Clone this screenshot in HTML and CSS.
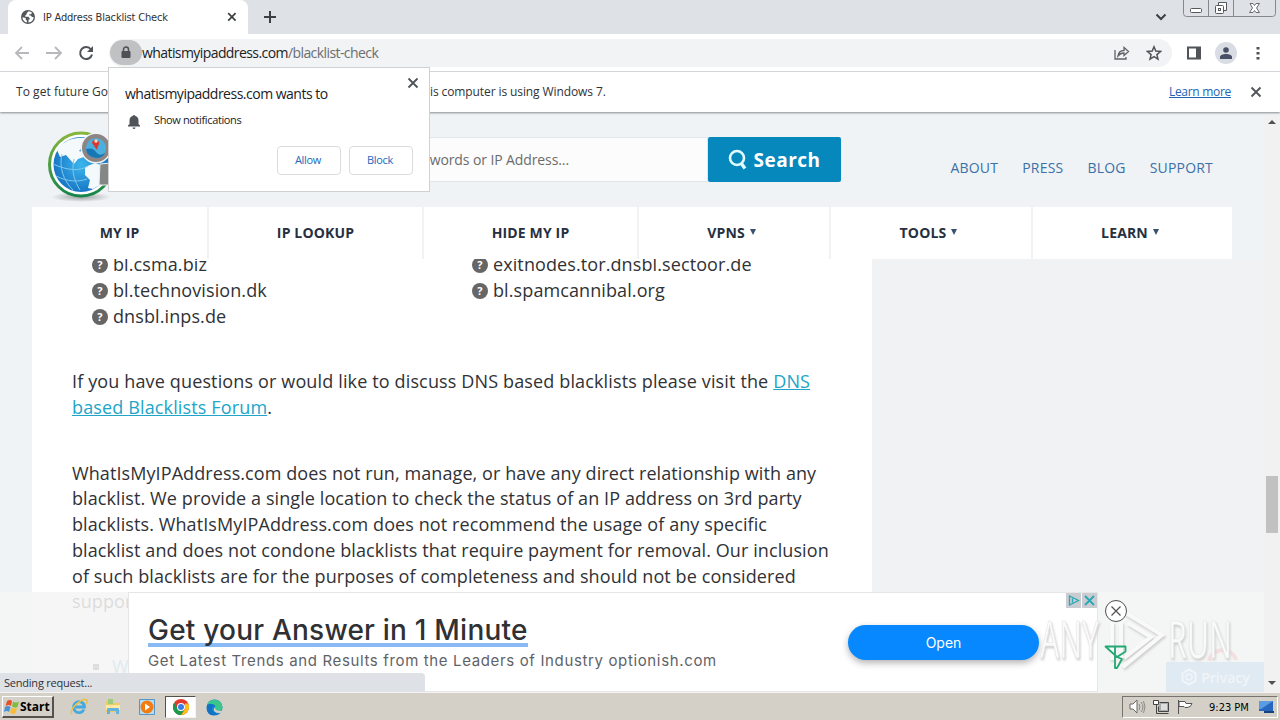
FILE: index.html
```html
<!DOCTYPE html>
<html lang="en">
<head>
    <meta charset="UTF-8">
    <title>IP Address Blacklist Check</title>
    <link rel="stylesheet" href="styles.css">
</head>
<body>
    <!-- Tab strip -->
    <div class="tab-strip">
        <div class="tab">
            <svg class="tab-icon" width="14" height="14" viewBox="0 0 14 14">
                <circle cx="7" cy="7" r="7" fill="#53565a"/>
                <path d="M7.5 1.3L5.6 3.2v1.3L4.2 5.6v1.2h3.2l1.3 1.4v1.4H7.5v2.8C10.6 12.2 12.6 10 12.6 7H11L9.8 5.5H8.3V4.2h1.8l.8-1.4C9.9 1.8 8.8 1.4 7.5 1.3zM1.4 7.2c.1 2.8 2 4.9 4.5 5.3V10.700L4.700 9.400V8.100z" fill="#fff"/>
            </svg>
            <span class="tab-title">IP Address Blacklist Check</span>
            <svg width="10" height="10" viewBox="0 0 10 10"><path d="M1.200 1.200l7.400 7.400M8.600 1.200L1.200 8.600" stroke="#3c4043" stroke-width="1.700"/></svg>
        </div>
        <svg class="new-tab" width="14" height="14" viewBox="0 0 14 14"><path d="M7 1v12M1 7h12" stroke="#3c4043" stroke-width="2"/></svg>
        <svg class="tab-search" width="12" height="8" viewBox="0 0 12 8"><path d="M1.500 1.500L6 6l4.500-4.500" fill="none" stroke="#3c4043" stroke-width="2"/></svg>
        <svg class="window-buttons" width="93" height="17" viewBox="0 0 93 17">
            <path d="M.5 0v13.500q0 3 3 3h86q3 0 3-3V0M25.500 0v16M50.500 0v16" fill="none" stroke="#85888e"/>
            <rect x="7.500" y="8.500" width="11" height="4" rx="1" fill="#fff" stroke="#55585c"/>
            <path d="M35.500 5.500v-3h8v8h-3" fill="#fff" stroke="#55585c"/>
            <rect x="32.500" y="5.500" width="8" height="8" rx="1" fill="#fff" stroke="#55585c"/>
            <rect x="35.500" y="8.500" width="2" height="2" fill="none" stroke="#55585c"/>
            <path d="M67 3.500h3l1.500 2L73 3.500h3.500L73.500 8l3 4.500H73l-1.500-2-1.500 2h-3.500l3-4.500z" fill="#fff" stroke="#666a70"/>
        </svg>
    </div>

    <!-- Toolbar -->
    <div class="toolbar">
        <svg class="nav-buttons" width="82" height="18" viewBox="0 0 82 18">
            <path d="M17 9H4M10 3L4 9l6 6" fill="none" stroke="#b6b8bb" stroke-width="1.800"/>
            <path d="M33 9h15M42 3l6 6-6 6" transform="translate(1 0)" fill="none" stroke="#b6b8bb" stroke-width="1.800"/>
            <path d="M79 5.500A6 6 0 1 0 80 10.500" fill="none" stroke="#505357" stroke-width="2"/>
            <path d="M81 2v6h-6z" fill="#505357"/>
        </svg>
        <div class="omnibox">
            <span class="site-chip">
                <svg width="10" height="13" viewBox="0 0 10 13"><path d="M2.500 6V3.500a2.500 2.500 0 0 1 5 0V6" fill="none" stroke="#4d5054" stroke-width="1.500"/><rect x="0.500" y="5" width="9" height="7" rx="1" fill="#4d5054"/></svg>
            </span>
            <span class="url">whatismyipaddress.com<span class="url-path">/blacklist-check</span></span>
            <svg class="share" width="16" height="14" viewBox="0 0 16 14"><path d="M1 4v9h11v-2M4 10c.5-4 2.500-5.500 6-5.500V1.500l4.500 4-4.500 4V7C7 7 5.500 8 4 10z" fill="none" stroke="#5f6368" stroke-width="1.300"/></svg>
            <svg class="star" width="16" height="16" viewBox="0 0 16 16"><path d="M8 1.800l1.800 4.300 4.700.4-3.600 3.100 1.100 4.600L8 11.700l-4 2.500 1.100-4.600L1.500 6.500l4.700-.4z" fill="none" stroke="#505357" stroke-width="1.500"/></svg>
        </div>
        <svg class="side-panel" width="14" height="14" viewBox="0 0 14 14"><path d="M1 1.500h12v11H1z" fill="none" stroke="#505357" stroke-width="2"/><path d="M9 1h5v12H9z" fill="#505357"/></svg>
        <span class="avatar"><svg width="12" height="12" viewBox="0 0 12 12"><circle cx="6" cy="3" r="2.800" fill="#475067"/><path d="M0 12V10c0-4 12-4 12 0v2z" fill="#475067"/></svg></span>
        <svg class="menu-dots" width="4" height="14" viewBox="0 0 4 14"><path d="M.5 1h3v2.500h-3zM.5 6h3v2.500h-3zM.5 11h3v2.500h-3z" fill="#505357"/></svg>
    </div>

    <!-- Info bar -->
    <div class="infobar">
        <span class="info-start">To get future Go</span>
        <span class="info-end">is computer is using Windows 7.</span>
        <a class="learn-more">Learn more</a>
        <svg width="12" height="12" viewBox="0 0 12 12"><path d="M1.500 1.500l9 9M10.500 1.500l-9 9" stroke="#505357" stroke-width="1.800"/></svg>
    </div>

    <div class="viewport">
        <div class="page">
            <header class="site-header">
                <svg class="logo" width="72" height="76" viewBox="0 0 72 76">
                    <defs>
                        <linearGradient id="ring" x2="0" y2="1"><stop offset="0" stop-color="#86b63e"/><stop offset="1" stop-color="#16854a"/></linearGradient>
                        <radialGradient id="sea"><stop offset="0" stop-color="#3bb6ee"/><stop offset="1" stop-color="#1977c6"/></radialGradient>
                        <radialGradient id="shade"><stop offset="0" stop-color="#9da0a0"/><stop offset="1" stop-color="#9da0a0" stop-opacity="0"/></radialGradient>
                    </defs>
                    <ellipse cx="36" cy="69" rx="30" ry="5" fill="url(#shade)"/>
                    <circle cx="36" cy="36.500" r="31.500" fill="#fff" stroke="url(#ring)" stroke-width="3"/>
                    <circle cx="36" cy="36.500" r="27.500" fill="url(#sea)"/>
                    <path d="M12 22C20 10 34 8 46 11l-2 8-5-2-5 6 7 2 5 6-7-2-6 2-4 5-8-9-6 2zM40 39l10-4 14 5c0 9-6 16-16 21l-5-1 2-8-5-5z" fill="#f4f9fc"/>
                    <path d="M8 36c15 7 28 7 35 2M11 48c12 6 22 6 31 3M17 26c-3 13 1 26 11 36M29 31c-3 13 1 23 6 31" fill="none" stroke="#7fc9ec" stroke-width="1"/>
                    <path d="M55 36l11-1v22H54z" fill="#858787" stroke="#eee"/>
                    <circle cx="51" cy="20" r="15.500" fill="#eef2f3"/>
                    <circle cx="51" cy="20" r="12" fill="#4ab1df" stroke="#8c8583" stroke-width="4"/>
                    <path d="M41 21q7-2 10 3t9 1q-2 5-9 5-9-1-10-9z" fill="#1677b7"/>
                    <path d="M52 22l-5-7q1-5 5-3 4 2 1 6z" fill="#dc3730"/><circle cx="51" cy="13" r="1.700" fill="#ffe0bd"/>
                </svg>
                <div class="search">
                    <div class="search-input"><span>ywords or IP Address...</span></div>
                    <button class="search-button">
                        <svg width="20" height="22" viewBox="0 0 20 22"><circle cx="9" cy="9" r="7" fill="none" stroke="#e2fbff" stroke-width="2.600"/><path d="M13 14l4 5.500" stroke="#e2fbff" stroke-width="3.400"/></svg>
                        <span>Search</span>
                    </button>
                </div>
                <nav class="top-links">
                    <a>ABOUT</a><a>PRESS</a><a>BLOG</a><a>SUPPORT</a>
                </nav>
            </header>

            <nav class="main-nav">
                <a><span>MY IP</span></a>
                <a><span>IP LOOKUP</span></a>
                <a><span>HIDE MY IP</span></a>
                <a><span>VPNS</span><i class="caret"></i></a>
                <a><span>TOOLS</span><i class="caret"></i></a>
                <a><span>LEARN</span><i class="caret"></i></a>
            </nav>

            <div class="content-row">
                <main class="article">
                    <div class="blacklists">
                        <ul>
                            <li><b>?</b><span>bl.csma.biz</span></li>
                            <li><b>?</b><span>bl.technovision.dk</span></li>
                            <li><b>?</b><span>dnsbl.inps.de</span></li>
                        </ul>
                        <ul>
                            <li><b>?</b><span>exitnodes.tor.dnsbl.sectoor.de</span></li>
                            <li><b>?</b><span>bl.spamcannibal.org</span></li>
                        </ul>
                    </div>
                    <p class="questions">If you have questions or would like to discuss DNS based blacklists please visit the <a>DNS<br>based Blacklists Forum</a>.</p>
                    <p class="disclaimer">WhatIsMyIPAddress.com does not run, manage, or have any direct relationship with any<br>
                        blacklist. We provide a single location to check the status of an IP address on 3rd party<br>
                        blacklists. WhatIsMyIPAddress.com does not recommend the usage of any specific<br>
                        blacklist and does not condone blacklists that require payment for removal. Our inclusion<br>
                        of such blacklists are for the purposes of completeness and should not be considered<br>
                        support</p>
                    <ul class="related"><li>W</li></ul>
                </main>
            </div>

            <!-- Anchored ad -->
            <div class="anchor-ad">
                <div class="ad">
                    <div class="ad-copy">
                        <div class="ad-title">Get your Answer in 1 Minute</div>
                        <div class="ad-text">Get Latest Trends and Results from the Leaders of Industry optionish.com</div>
                    </div>
                    <button class="open-button">Open</button>
                    <svg class="ad-choices" width="31" height="15" viewBox="0 0 31 15">
                        <path d="M0 0h15v15H0zM16 0h15v15H16z" fill="#c9cdd1"/>
                        <path d="M3.500 3v9l9-4.500zM6.500 5.500v4" fill="none" stroke="#28a7b7" stroke-width="1.300"/>
                        <path d="M19 3l9 9M28 3l-9 9" stroke="#28a7b7" stroke-width="1.800"/>
                    </svg>
                </div>
                <div class="privacy">
                    <svg width="18" height="18" viewBox="0 0 18 18"><path d="M9 1.500l6.500 3.500v8L9 16.500 2.500 13V5z" fill="none" stroke="#f0f5f9" stroke-width="2"/><circle cx="9" cy="9" r="3" fill="none" stroke="#f0f5f9" stroke-width="1.500"/></svg>
                    <span>Privacy</span>
                </div>
                <svg class="watermark" width="210" height="100" viewBox="0 0 210 100">
                    <path d="M177 69a14 14 0 0 1 27-1" fill="none" stroke="#f5dfe0" stroke-width="4"/>
                    <g class="mark">
                        <text x="8" y="66" textLength="59" lengthAdjust="spacingAndGlyphs">ANY</text>
                        <text x="136" y="66" textLength="64" lengthAdjust="spacingAndGlyphs">RUN</text>
                        <path d="M80 30v38M89 30v38M94 21l36 22-39 32M96 31l23 14-27 21"/>
                    </g>
                    <circle cx="84" cy="19" r="10.500" fill="#fff" stroke="#505050"/>
                    <path d="M79.500 14.500l9 9M88.500 14.500l-9 9" stroke="#505050" stroke-width="1.200"/>
                    <path d="M73.500 54.500h20v5L85 65zM85 65l5 2-5 9h-2V55" fill="none" stroke="#21a873" stroke-width="1.800" stroke-linejoin="round"/>
                </svg>
            </div>
        </div>

        <div class="scrollbar">
            <i class="arrow-up"></i>
            <div class="thumb"></div>
            <i class="arrow-down"></i>
        </div>
        <div class="status">Sending request...</div>
    </div>

    <!-- Taskbar -->
    <div class="taskbar">
        <div class="start">
            <svg width="16" height="16" viewBox="0 0 16 16"><path d="M3 2q3-2 5 0L7 7Q5 5 1.500 7z" fill="#e8502c"/><path d="M9 2.500q3 2 6 0L13.500 8q-3 1.500-5.500-.5z" fill="#80bc42"/><path d="M1 8q3-2 5.500 0L5 13q-2-2-5 0z" fill="#4692d5"/><path d="M7.500 8.500q3 2 5.500.5L11.500 14q-3 2-5.500-.5z" fill="#f9bd2f"/></svg>
            <span>Start</span>
        </div>
        <div class="quick-launch">
            <svg width="18" height="18" viewBox="0 0 18 18"><path d="M14 11.500A5.500 5.500 0 1 1 14.500 9H5" fill="none" stroke="#43a9df" stroke-width="2.800"/><path d="M2 16C-2 12 12-1 17 2q1 1-1 4" fill="none" stroke="#edc044" stroke-width="1.500"/></svg>
            <svg width="18" height="18" viewBox="0 0 18 18"><path d="M2 3h5l1 2h8v9H2z" fill="#efcb67"/><path d="M4 1h5v5H4z" fill="#9ccd7c"/><path d="M2 7h14v5H2z" fill="#ffe9a3"/><path d="M3 16v-5q0-1 1-1h10q1 0 1 1v5h-3v-3H6v3z" fill="#62b3de"/></svg>
            <svg width="18" height="18" viewBox="0 0 18 18"><path d="M1.500 1.500h15v15h-15z" fill="#b7dbef" stroke="#5797c8"/><circle cx="9" cy="9" r="6.500" fill="#f07c13"/><path d="M7 5.500v7l5-3.500z" fill="#fff"/></svg>
        </div>
        <div class="active-task">
            <svg width="16" height="16" viewBox="0 0 16 16"><circle cx="8" cy="8" r="8" fill="#e4392d"/><path d="M1.100 4L4.500 10l3.500 6A8 8 0 0 1 1.100 4z" fill="#1c9b4d"/><path d="M8 16l4-6V4.500h3.200A8 8 0 0 1 8 16z" fill="#fbc116"/><path d="M1.100 4l3.500 6A4 4 0 0 0 11.500 10L8 16A8 8 0 0 1 1.100 4z" fill="#1c9b4d"/><circle cx="8" cy="8" r="4" fill="#fff"/><circle cx="8" cy="8" r="3" fill="#367fe6"/></svg>
        </div>
        <svg class="edge" width="17" height="17" viewBox="0 0 17 17"><circle cx="8.500" cy="8.500" r="8" fill="#1687d4"/><path d="M1 6a8 8 0 0 1 15.500 2q0 4-5 4-3 0-2-2 1-5-5-5z" fill="#3bc78b"/><path d="M1 6q5-3 8 1-3 0-3 3 0 4 6 5Q3 19 .8 11z" fill="#1472c5"/><path d="M9.500 8q-1 5 7 3.500l-1 2q-4 1.500-7-1-2-2.500 1-4.500z" fill="#d4d0c8"/></svg>
        <div class="tray">
            <svg width="72" height="18" viewBox="0 0 72 18">
                <path d="M2 6h3l4-4v13l-4-4H2z" fill="#fff" stroke="#666"/><path d="M11 6q2 3 0 6M13 4q4 5 0 10M15.500 3q3 6 0 12" fill="none" stroke="#888"/>
                <path d="M31.500 4.500h9v9h-10v-5" fill="#aaa" stroke="#444"/><path d="M33 6h6v6h-6z" fill="#ddd"/><path d="M25.500 2.500h5v4h-5z" fill="#fff" stroke="#444"/><path d="M28.500 6.500v9h12" fill="none" stroke="#444"/>
                <path d="M50.500 2v14M51 3.500h6l1 2h6q-1 4-5 4h-2l-1-1h-5z" fill="#fff" stroke="#555"/>
            </svg>
            <time>9:23 PM</time>
            <svg width="16" height="14" viewBox="0 0 16 14"><path d="M0 1h14v10H0z" fill="#2867c0"/><path d="M0 1h14L2 9H0z" fill="#5b9be2"/><path d="M5 12h10" stroke="#16427d" stroke-width="2"/></svg>
        </div>
    </div>

    <!-- Permission prompt -->
    <div class="prompt">
        <div class="prompt-head">
            <div class="prompt-title">whatismyipaddress.com wants to</div>
            <svg width="12" height="12" viewBox="0 0 12 12"><path d="M1.500 1.500l9 9M10.500 1.500l-9 9" stroke="#505357" stroke-width="1.800"/></svg>
        </div>
        <div class="prompt-item">
            <svg width="14" height="16" viewBox="0 0 14 16"><path d="M1 12.500v-1L2.500 10V6.500c0-2.500 1.200-4 3.300-4.500V1.200h2.400V2c2.100.5 3.300 2 3.300 4.500V10l1.500 1.500v1zM5.500 13.500h3q-.2 1.500-1.500 1.500t-1.500-1.500z" fill="#505357"/></svg>
            <span>Show notifications</span>
        </div>
        <div class="prompt-buttons">
            <button>Allow</button>
            <button>Block</button>
        </div>
    </div>
</body>
</html>
```
FILE: styles.css
```css
* {
    box-sizing: border-box;
}
body {
    margin: 0;
    width: 1280px;
    height: 720px;
    overflow: hidden;
    position: relative;
    display: flex;
    flex-direction: column;
    font-family: "Open Sans", sans-serif;
    font-size: 12px;
    color: #303236;
    white-space: nowrap;
}
svg {
    display: block;
    flex: none;
}
button {
    font-family: inherit;
    padding: 0;
    white-space: nowrap;
}
ul, p {
    margin: 0;
    padding: 0;
    list-style: none;
}

/* Browser chrome */
.tab-strip {
    height: 34px;
    flex: none;
    display: flex;
    align-items: center;
    background: #dee1e6;
    padding: 0 4px 0 8px;
}
.tab {
    width: 240px;
    height: 34px;
    display: flex;
    align-items: center;
    background: #fff;
    border-radius: 8px 8px 0 0;
    padding: 0 11px 0 13px;
}
.tab-title {
    font-family: "DejaVu Sans Condensed", "DejaVu Sans", sans-serif;
    font-stretch: condensed;
    font-size: 11px;
    letter-spacing: -0.18px;
    margin: 0 auto 0 8px;
}
.new-tab {
    margin-left: 15px;
}
.tab-search {
    margin: 0 16px 0 auto;
}
.window-buttons {
    align-self: flex-start;
}
.toolbar {
    height: 38px;
    flex: none;
    display: flex;
    align-items: center;
    background: #fff;
    border-bottom: 1px solid #dadce0;
    padding: 0 19px 0 12px;
}
.omnibox {
    flex: 1;
    height: 28px;
    display: flex;
    align-items: center;
    background: #f1f3f4;
    border-radius: 14px;
    margin: 0 15px 0 15px;
    padding-right: 10px;
}
.site-chip {
    width: 32px;
    height: 25px;
    display: flex;
    align-items: center;
    justify-content: center;
    background: #bfc1c3;
    border-radius: 13px;
    margin-left: 1px;
}
.url {
    font-size: 14px;
    letter-spacing: -0.58px;
    color: #202124;
    margin-right: auto;
}
.url-path {
    color: #6b6e72;
}
.share {
    margin-right: 16px;
}
.avatar {
    width: 22px;
    height: 22px;
    border-radius: 50%;
    background: #d9dde3;
    display: flex;
    align-items: center;
    justify-content: center;
    margin: 0 19px 0 14px;
}
.menu-dots {
    margin-right: 1px;
}
.infobar {
    height: 40px;
    flex: none;
    display: flex;
    align-items: center;
    background: #fff;
    padding: 0 18px 0 16px;
    font-size: 12px;
    z-index: 1;
    box-shadow: 0 1px 2px #888d90;
}
.info-start,
.info-end,
.learn-more {
    padding-bottom: 2px;
}
.info-start {
    width: 414px;
    letter-spacing: 0.05px;
}
.info-end {
    letter-spacing: -0.1px;
}
.learn-more {
    margin: 0 19px 0 auto;
    color: #2464b5;
    letter-spacing: -0.3px;
    text-decoration: underline;
}

/* Web page */
.viewport {
    flex: 1;
    min-height: 0;
    display: flex;
    position: relative;
}
.page {
    flex: 1;
    min-width: 0;
    height: 100%;
    overflow: hidden;
    background: #eff3f6;
    position: relative;
}
.site-header {
    height: 95px;
    display: flex;
    padding: 0 51px 0 45px;
}
.logo {
    margin-top: 16px;
}
.search {
    display: flex;
    height: 45px;
    width: 541px;
    margin: 25px 0 0 183px;
}
.search-input {
    flex: 1;
    background: #fcfcfc;
    border: 1px solid #e4e5e6;
    display: flex;
    align-items: center;
    justify-content: flex-end;
    padding-right: 138px;
    font-size: 14px;
    letter-spacing: -0.1px;
    color: #6b6b6b;
}
.search-button {
    width: 133px;
    display: flex;
    align-items: center;
    justify-content: center;
    gap: 5px;
    background: #0788bd;
    color: #fff;
    border: 0;
    border-radius: 2px;
    font-size: 19px;
    font-weight: bold;
    letter-spacing: 0.5px;
}
.top-links {
    display: flex;
    gap: 24px;
    margin: 46px 0 0 auto;
    font-size: 14px;
    font-weight: 500;
    letter-spacing: 0.2px;
    color: #3c70a6;
}
.main-nav {
    width: 1200px;
    height: 52px;
    margin-left: 32px;
    display: grid;
    grid-template-columns: 177px 215px 215px 192px 202px 199px;
    background: #fff;
    font-size: 14px;
    font-weight: bold;
    letter-spacing: 0.15px;
    color: #263040;
    position: relative;
}
.main-nav a {
    display: flex;
    align-items: center;
    justify-content: center;
    gap: 5px;
    padding-bottom: 2px;
    border-right: 2px solid #f1f2f3;
}
.main-nav a:last-child {
    border-right: 0;
}
.caret {
    margin-right: 5px;
    border: 3.5px solid transparent;
    border-top: 6px solid #38526d;
    border-bottom: 0;
}
.content-row {
    background: #f0f2f3;
    border-left: 32px solid #eff3f6;
    height: 440px;
    overflow: hidden;
}
.article {
    width: 840px;
    height: 440px;
    background: #fff;
    padding-left: 40px;
    font-size: 18px;
    line-height: 25.75px;
    letter-spacing: 0.09px;
    color: #303236;
}
.blacklists {
    display: grid;
    grid-template-columns: 380px 380px;
    margin: -7px 0 0 20px;
    letter-spacing: 0.1px;
}
.blacklists li {
    display: flex;
    align-items: center;
    gap: 5px;
    height: 26px;
}
.blacklists b {
    width: 16px;
    height: 16px;
    border-radius: 50%;
    background: #666;
    color: #fff;
    font-size: 11px;
    line-height: 16px;
    text-align: center;
    margin-bottom: 1px;
}
.questions {
    margin-top: 39px;
    letter-spacing: 0.14px;
}
.questions a {
    color: #20a5c8;
    text-decoration: underline;
}
.disclaimer {
    margin-top: 40px;
}
.related {
    margin: 39px 0 0 40px;
    list-style: square;
    color: #3d9ac5;
}
.related li::marker {
    color: #444;
}

/* Anchored ad */
.anchor-ad {
    position: absolute;
    left: 0;
    bottom: 0;
    width: 1264px;
    height: 100px;
    padding-left: 128px;
    background: rgba(245, 245, 245, 0.87);
}
.ad {
    width: 970px;
    height: 100px;
    display: flex;
    background: #fff;
    border: 1px solid #e4e6e8;
    font-family: Inter, sans-serif;
    padding-left: 19px;
}
.ad-copy {
    width: 700px;
    padding-top: 19px;
}
.ad-title {
    width: 380px;
    height: 35px;
    line-height: 36px;
    font-size: 28px;
    font-weight: 500;
    letter-spacing: 0.22px;
    color: #303134;
    border-bottom: 4px solid #8abaf5;
}
.ad-text {
    font-size: 15px;
    line-height: 24px;
    letter-spacing: 0.64px;
    color: #5f6368;
    margin-top: 2px;
}
.open-button {
    width: 191px;
    height: 35px;
    margin-top: 32px;
    background: #0788ff;
    color: #fff;
    border: 0;
    border-radius: 18px;
    font-size: 14px;
    box-shadow: 0 3px 7px rgba(0, 0, 0, 0.3);
}
.ad-choices {
    margin-left: auto;
}
.privacy {
    position: absolute;
    right: 0;
    bottom: 0;
    width: 98px;
    height: 30px;
    display: flex;
    align-items: center;
    justify-content: center;
    gap: 3px;
    background: #e0eaf2;
    color: #f0f5f9;
    font-size: 14px;
    font-weight: 600;
}
.watermark {
    position: absolute;
    left: 1032px;
    top: 0;
    font-family: "Open Sans", sans-serif;
    font-size: 51px;
}
.mark {
    fill: #fafafa;
    stroke: #e4e4e4;
    stroke-width: 0.6px;
    filter: drop-shadow(1px 2px 1px #cecece);
}
.mark path {
    fill: none;
    stroke: #f9f9f9;
    stroke-width: 4px;
}
.scrollbar {
    width: 16px;
    height: 100%;
    display: flex;
    flex-direction: column;
    align-items: center;
    background: #f1f1f1;
}
.arrow-up {
    margin-top: 8px;
    border: 4px solid transparent;
    border-bottom-color: #505050;
    border-top: 0;
}
.thumb {
    width: 12px;
    height: 57px;
    background: #c1c1c1;
    margin-top: 352px;
}
.arrow-down {
    margin: auto 0 7px;
    border: 4px solid transparent;
    border-top-color: #505050;
    border-bottom: 0;
}
.status {
    position: absolute;
    left: 0;
    bottom: 0;
    width: 425px;
    height: 19px;
    padding-left: 4px;
    line-height: 19px;
    font-size: 11px;
    letter-spacing: -0.22px;
    background: #dee1e6;
    border-top-right-radius: 4px;
}

/* Taskbar */
.taskbar {
    height: 28px;
    flex: none;
    display: flex;
    align-items: center;
    background: #d4d0c8;
    border-top: 1px solid #f5f4f2;
    padding: 1px 2px 0;
}
.start {
    width: 52px;
    height: 22px;
    display: flex;
    align-items: center;
    border: 1px solid #fff;
    border-right: 2px solid #55524d;
    border-bottom: 2px solid #55524d;
    padding-left: 1px;
    color: #000;
    font-size: 12px;
    font-weight: bold;
}
.quick-launch {
    display: flex;
    gap: 16px;
    margin-left: 16px;
}
.active-task {
    width: 31px;
    height: 22px;
    background: #fff;
    border: 1px solid #55524d;
    border-right-color: #f5f4f2;
    border-bottom-color: #f5f4f2;
    display: flex;
    align-items: center;
    justify-content: center;
    margin: 0 10px 0 9px;
}
.tray {
    width: 156px;
    height: 22px;
    display: flex;
    align-items: center;
    border: 1px solid #77736d;
    border-right-color: #fff;
    border-bottom-color: #fff;
    margin-left: auto;
    padding: 0 2px 0 5px;
    color: #000;
}
.tray time {
    font-family: "DejaVu Sans Condensed", "DejaVu Sans", sans-serif;
    font-stretch: condensed;
    font-size: 11px;
    margin: 0 auto 0 9px;
}

/* Permission prompt */
.prompt {
    position: absolute;
    left: 108px;
    top: 67px;
    z-index: 2;
    width: 322px;
    height: 125px;
    background: #fff;
    border: 1px solid #cfd1d3;
    padding: 9px 16px 16px;
    color: #202124;
}
.prompt-head {
    display: flex;
    justify-content: space-between;
    margin-right: -6px;
}
.prompt-title {
    font-size: 14px;
    line-height: 20px;
    letter-spacing: -0.5px;
    padding-top: 7px;
}
.prompt-item {
    display: flex;
    align-items: center;
    gap: 13px;
    padding: 9px 0 0 2px;
    font-size: 11px;
    letter-spacing: -0.37px;
}
.prompt-item span {
    line-height: 14px;
    padding-bottom: 3px;
}
.prompt-buttons {
    display: flex;
    justify-content: flex-end;
    gap: 8px;
    margin-top: 16px;
}
.prompt-buttons button {
    width: 64px;
    height: 29px;
    background: #fff;
    border: 1px solid #dadce0;
    border-radius: 4px;
    color: #2268bd;
    font-size: 11px;
    letter-spacing: -0.3px;
    padding: 0 2px 2px 0;
}
```
